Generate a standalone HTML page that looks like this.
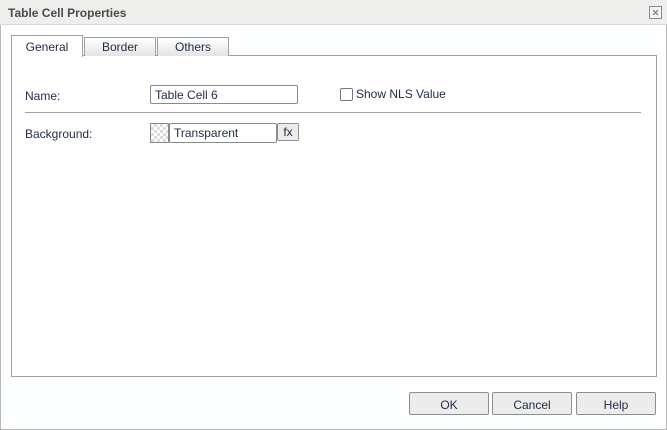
<!DOCTYPE html><html><head><style>
*{box-sizing:border-box}body{margin:0;width:667px;height:430px;background:#fff;font-family:"Liberation Sans",Tahoma,sans-serif;font-size:12px;color:#1f2a44;position:relative;overflow:hidden}
.a{position:absolute}
#dlg{left:0;top:0;width:667px;height:430px;border:1px solid #b8b8b8;background:#fdfefe}
#tb{left:0;top:0;width:667px;height:25px;background:#eeeeec;border-bottom:1px solid #d9d9d9}
.tab{top:37px;height:19px;border:1px solid #a0a0a0;border-bottom:none;background:linear-gradient(#fff,#e4e4e4);text-align:center;line-height:18px;color:#1f2a44}
.btn{top:392px;width:80px;height:23px;border:1px solid #8e8e8e;border-radius:2px;background:#ececec;text-align:center;line-height:24px;color:#1f2a44}
</style></head><body>
<div class="a" id="dlg"></div>
<div class="a" id="tb"></div>
<div class="a" style="left:8px;top:6px;font-weight:bold;font-size:12px;color:#4b4b4b">Table Cell Properties</div>
<svg class="a" style="left:649px;top:6px" width="13" height="13"><rect x="0.5" y="0.5" width="12" height="12" fill="#f4f4f4" stroke="#8a8a8a"/><path d="M4 4L9 9M9 4L4 9" stroke="#777" stroke-width="1.2"/></svg>
<div class="a" style="left:11px;top:55px;width:646px;height:322px;border:1px solid #a0a0a0;background:#fff"></div>
<div class="a tab" style="left:84px;width:72px">Border</div>
<div class="a tab" style="left:157px;width:72px">Others</div>
<div class="a" style="left:11px;top:35px;width:72px;height:22px;border:1px solid #a0a0a0;border-bottom:none;background:#fff;text-align:center;line-height:22px">General</div>
<div class="a" style="left:25px;top:89px">Name:</div>
<div class="a" style="left:150px;top:85px;width:148px;height:19px;border:1px solid #8a8a8a;border-radius:2px;padding-left:4px;line-height:18px">Table Cell 6</div>
<div class="a" style="left:340px;top:88px;width:13px;height:13px;border:1px solid #777;border-radius:2px"></div>
<div class="a" style="left:356px;top:87px">Show NLS Value</div>
<div class="a" style="left:25px;top:112px;width:616px;height:1px;background:#a0a0a0"></div>
<div class="a" style="left:25px;top:127px">Background:</div>
<div class="a" style="left:150px;top:123px;width:19px;height:20px;border:1px solid #888;background-color:#fff;background-image:linear-gradient(45deg,#ddd 25%,transparent 25%,transparent 75%,#ddd 75%),linear-gradient(45deg,#ddd 25%,transparent 25%,transparent 75%,#ddd 75%);background-size:6px 6px;background-position:0 0,3px 3px"></div>
<div class="a" style="left:169px;top:123px;width:108px;height:20px;border:1px solid #8a8a8a;border-radius:2px;padding-left:4px;line-height:19px">Transparent</div>
<div class="a" style="left:277px;top:123px;width:22px;height:18px;border:1px solid #8e8e8e;border-radius:2px;background:#ececec;text-align:center;line-height:17px">fx</div>
<div class="a btn" style="left:409px">OK</div>
<div class="a btn" style="left:492px">Cancel</div>
<div class="a btn" style="left:576px">Help</div>
</body></html>
